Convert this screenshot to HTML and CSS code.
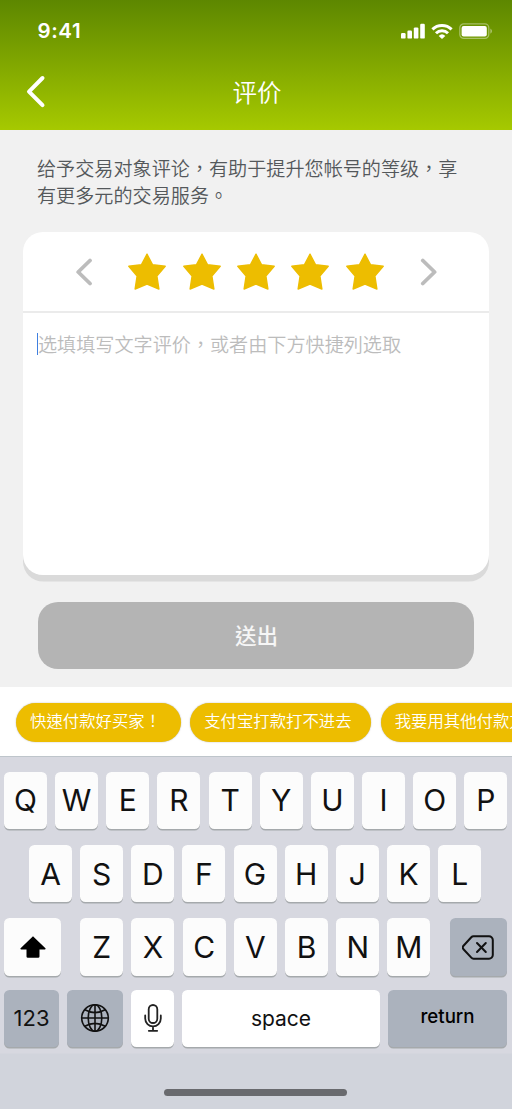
FILE: index.html
```
<!DOCTYPE html>
<html lang="zh-Hant">
<head>
<meta charset="utf-8">
<title>评价</title>
<link rel="stylesheet" href="styles.css">
</head>
<body>
<svg class="defs" aria-hidden="true">
  <symbol id="star" viewBox="0 0 38 37"><path d="M19 1.2 24.6 11.8 37.2 13.3 28.9 23 30.9 36 19 31 7.1 36 9.1 23 .8 13.3 13.4 11.8Z" fill="#edbd00" stroke="#edbd00" stroke-width="1.4" stroke-linejoin="round"/></symbol>
</svg>
<header class="header">
  <div class="status">
    <span class="time">9:41</span>
    <svg class="signal" width="24" height="16" viewBox="0 0 24 16" fill="#fff"><rect y="10" width="4.6" height="5.6" rx="1.2"/><rect x="6.4" y="7.6" width="4.6" height="8" rx="1.2"/><rect x="12.8" y="4.4" width="4.6" height="11.2" rx="1.2"/><rect x="19.2" y=".8" width="4.6" height="14.8" rx="1.2"/></svg>
    <svg class="wifi" width="22" height="17" viewBox="0 0 22 17" fill="none" stroke="#fff" stroke-width="3"><path d="M1.4 6.4a13.7 13.7 0 0 1 19.2 0"/><path d="M5 10.3a8.600 8.600 0 0 1 12 0"/><path d="M11 15.9 7.7 12.9a4.800 4.800 0 0 1 6.600 0Z" fill="#fff" stroke="none"/></svg>
    <svg class="battery" width="34" height="17" viewBox="0 0 34 17"><rect x=".8" y=".8" width="29" height="14.6" rx="4" fill="none" stroke="#fff" stroke-opacity=".4" stroke-width="1.2"/><rect x="2.6" y="2.9" width="25.2" height="10.6" rx="2" fill="#fff"/><path d="M31.4 5.4v5.4q1.6-1 1.6-2.7t-1.6-2.7Z" fill="#fff" opacity=".45"/></svg>
  </div>
  <div class="nav">
    <svg class="back" width="20" height="34" viewBox="0 0 20 34"><path d="M16.500 3 3 16.600 16.500 30.200" fill="none" stroke="#fff" stroke-width="4" stroke-linecap="round" stroke-linejoin="round"/></svg>
    <h1 class="title">评价</h1>
  </div>
</header>
<main class="main">
  <p class="intro">给予交易对象评论，有助于提升您帐号的等级，享有更多元的交易服务。</p>
  <section class="card">
    <div class="rating">
      <svg class="arrow" width="18" height="28" viewBox="0 0 18 28"><path d="M15 2.500 3.200 14 15 25.500"/></svg>
      <div class="stars">
        <svg class="star"><use href="#star"/></svg><svg class="star"><use href="#star"/></svg><svg class="star"><use href="#star"/></svg><svg class="star"><use href="#star"/></svg><svg class="star"><use href="#star"/></svg>
      </div>
      <svg class="arrow" width="18" height="28" viewBox="0 0 18 28"><path d="M3.800 2.500 15.600 14 3.800 25.500"/></svg>
    </div>
    <div class="comment"><span class="caret"></span><span class="placeholder">选填填写文字评价，或者由下方快捷列选取</span></div>
  </section>
  <button class="submit">送出</button>
</main>
<div class="chips">
  <span class="chip">快速付款好买家！</span>
  <span class="chip">支付宝打款打不进去</span>
  <span class="chip">我要用其他付款方式</span>
</div>
<div class="keyboard">
  <div class="row">
    <span class="key">Q</span><span class="key">W</span><span class="key">E</span><span class="key">R</span><span class="key">T</span><span class="key">Y</span><span class="key">U</span><span class="key">I</span><span class="key">O</span><span class="key">P</span>
  </div>
  <div class="row row-middle">
    <span class="key">A</span><span class="key">S</span><span class="key">D</span><span class="key">F</span><span class="key">G</span><span class="key">H</span><span class="key">J</span><span class="key">K</span><span class="key">L</span>
  </div>
  <div class="row row-third">
    <span class="key shift"><svg width="26" height="22" viewBox="0 0 26 22"><path d="M13 .2 25.400 12.200a.7.7 0 0 1-.5 1.200H19.500v7a1.400 1.400 0 0 1-1.400 1.400H7.900A1.400 1.400 0 0 1 6.500 20.400v-7H1.100a.7.7 0 0 1-.5-1.200Z" fill="#000"/></svg></span>
    <div class="letters"><span class="key">Z</span><span class="key">X</span><span class="key">C</span><span class="key">V</span><span class="key">B</span><span class="key">N</span><span class="key">M</span></div>
    <span class="key dark delete"><svg width="32" height="25" viewBox="0 0 32 25" fill="none" stroke="#111" stroke-width="2" stroke-linejoin="round" stroke-linecap="round"><path d="M11.500 1.300H27a3.800 3.800 0 0 1 3.800 3.800v14.800a3.800 3.800 0 0 1-3.800 3.800H11.500a3 3 0 0 1-2.200-1L1.500 14.200a2.500 2.500 0 0 1 0-3.400l7.800-8.500a3 3 0 0 1 2.200-1Z"/><path d="m15 8 8.800 9M23.800 8 15 17"/></svg></span>
  </div>
  <div class="row row-bottom">
    <span class="key dark numbers">123</span>
    <span class="key dark globe"><svg width="30" height="30" viewBox="0 0 30 30" fill="none" stroke="#111" stroke-width="1.600"><circle cx="15" cy="15" r="13.300"/><ellipse cx="15" cy="15" rx="6.800" ry="13.300"/><path d="M15 1.700v26.600M1.700 15h26.600M4.800 6.800Q15 12.400 25.200 6.800M4.800 23.200Q15 17.600 25.200 23.200"/></svg></span>
    <span class="key mic"><svg width="18" height="28" viewBox="0 0 18 28" fill="none" stroke="#222" stroke-width="1.800" stroke-linecap="round"><rect x="4.700" y="1" width="8.600" height="18" rx="4.300"/><path d="M1.200 11.500v3a7.800 7.800 0 0 0 15.600 0v-3M9 22.500v4M4.800 26.800h8.400"/></svg></span>
    <span class="key space">space</span>
    <span class="key dark return">return</span>
  </div>
  <div class="home"><div class="home-bar"></div></div>
</div>
</body>
</html>
```
FILE: styles.css
```
* { box-sizing: border-box; }
body {
  margin: 0;
  width: 512px;
  height: 1109px;
  overflow: hidden;
  display: flex;
  flex-direction: column;
  background: #f1f1f1;
  font-family: "Noto Sans CJK TC", sans-serif;
}
svg { display: block; flex: none; }
.defs { position: absolute; width: 0; height: 0; }
.header {
  height: 129.500px;
  flex: none;
  color: #fff;
  background: linear-gradient(#5d8700, #a6c900);
}
.status {
  display: flex;
  align-items: center;
  height: 62px;
  padding: 0 19px 0 37.500px;
}
.time {
  flex: 1;
  font: 600 20.500px/24px Inter, sans-serif;
  letter-spacing: .6px;
}
.signal { margin-right: 6px; }
.wifi { margin-right: 6px; }
.nav {
  display: grid;
  grid-template-columns: 61px 1fr 59px;
  height: 59px;
  align-items: center;
}
.back { margin-left: 25.500px; }
.title {
  margin: 0;
  text-align: center;
  font-size: 24.500px;
  font-weight: 350;
  line-height: 36px;
}
.main {
  height: 557.500px;
  flex: none;
  padding: 25.500px 23px 0;
}
.intro {
  margin: 0 14px;
  height: 77px;
  font-size: 19.120px;
  line-height: 27.300px;
  font-weight: 350;
  color: #54585b;
}
.card {
  height: 342.500px;
  border-radius: 20px;
  background: #fff;
  box-shadow: 0 6.500px 0 #dadada;
}
.rating {
  height: 81px;
  display: flex;
  align-items: center;
  justify-content: center;
  gap: 35px;
  border-bottom: 2px solid #ebebeb;
}
.arrow { fill: none; stroke: #bcbcbc; stroke-width: 3.800; stroke-linecap: round; stroke-linejoin: round; }
.stars { display: flex; gap: 16.400px; }
.star { width: 38px; height: 37px; }
.comment {
  display: flex;
  align-items: center;
  height: 62px;
  padding-left: 14px;
}
.caret { width: 1px; height: 22px; background: #3f7fe0; }
.placeholder { font-size: 19.120px; line-height: 28px; font-weight: 350; color: #bcbcbc; }
.submit {
  display: block;
  width: 436px;
  height: 67px;
  margin: 27.500px 0 0 15px;
  padding: 0 0 2px 1px;
  border: 0;
  border-radius: 20px;
  background: #b4b4b4;
  color: #f6f6f6;
  font: 500 21.500px/30px "Noto Sans CJK TC", sans-serif;
}
.chips {
  display: flex;
  gap: 9.500px;
  height: 69px;
  flex: none;
  padding: 16px 0 0 16px;
  overflow: hidden;
  background: #fff;
}
.chip {
  flex: none;
  height: 38.500px;
  padding: 0 19.500px 0 14px;
  border-radius: 20px;
  background: #edbd00;
  box-shadow: 0 0 1.500px #aaa;
  color: #fff;
  font-size: 16.400px;
  font-weight: 350;
  line-height: 34.500px;
}
.keyboard {
  flex: 1;
  border-top: 1px solid #bec5cb;
  background: linear-gradient(#d7d8e0 296px, #d1d4dc 297px);
  font-family: Inter, sans-serif;
  color: #111;
  padding-top: 14.500px;
}
.row {
  display: flex;
  gap: 8.150px;
  height: 57.300px;
  margin-bottom: 16.200px;
  padding: 0 5px 0 4px;
}
.key {
  width: 43px;
  height: 57.300px;
  flex: none;
  display: flex;
  align-items: center;
  justify-content: center;
  border-radius: 5.500px;
  background: #fcfcfc;
  box-shadow: 0 1.500px .5px #a5a9ac;
  font-size: 30px;
}
.row-middle { padding-left: 29px; }
.row-third { gap: 19.300px; margin-bottom: 14px; }
.letters { display: flex; gap: 8.200px; }
.shift, .delete { width: 57px; }
.dark { background: #abb2bd; }
.row-bottom { gap: 8px; margin-bottom: 0; }
.numbers { width: 55px; font-size: 22px; }
.globe { width: 56px; }
.mic { width: 43px; background: #fff; }
.space { width: 198px; background: #fff; font-size: 21px; }
.return { width: 119px; font-size: 18.700px; font-weight: 500; padding-bottom: 4px; color: #000; }
.home {
  display: flex;
  justify-content: center;
  padding: 42px 1px 0 0;
}
.home-bar { width: 183px; height: 7px; border-radius: 4px; background: #696a6e; }
```
